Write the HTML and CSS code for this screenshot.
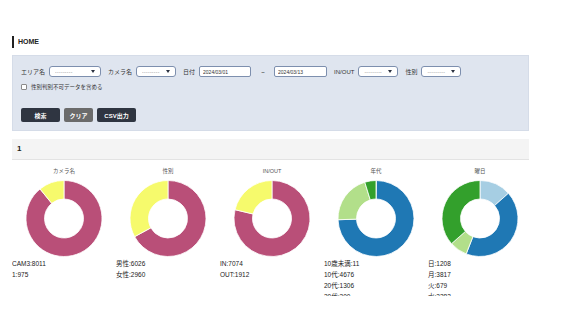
FILE: index.html
```html
<!DOCTYPE html>
<html>
<head>
    <title>HOME</title>
    <meta charset="utf-8">
    <link rel="stylesheet" href="styles.css">
</head>
<body>
    <div class="page">
        <h1 class="page-title">HOME</h1>

        <form class="search-panel">
            <div class="search-row">
                <label class="field">エリア名
                    <span class="select-wrap select-area"><select><option>---------</option></select></span>
                </label>
                <label class="field">カメラ名
                    <span class="select-wrap select-small"><select><option>---------</option></select></span>
                </label>
                <label class="field field-date">日付
                    <input type="text" class="date-input" value="2024/03/01">
                </label>
                <span class="tilde">~</span>
                <input type="text" class="date-input date-to" value="2024/03/13">
                <label class="field">IN/OUT
                    <span class="select-wrap select-small"><select><option>---------</option></select></span>
                </label>
                <label class="field">性別
                    <span class="select-wrap select-small"><select><option>---------</option></select></span>
                </label>
            </div>
            <label class="check-row"><input type="checkbox">性別判別不可データを含める</label>
            <div class="button-row">
                <button type="button" class="btn btn-dark">検索</button>
                <button type="button" class="btn btn-gray">クリア</button>
                <button type="button" class="btn btn-dark">CSV出力</button>
            </div>
        </form>

        <div class="result-header">1</div>

        <div class="chart-row">
            <div class="chart" data-values="8011,975" data-colors="#b94f78,#f6fa6c">
                <div class="chart-title">カメラ名</div>
                <svg class="donut" width="104" height="79" viewBox="0 0 104 79"></svg>
                <ul class="chart-legend">
                    <li>CAM3:8011</li>
                    <li>1:975</li>
                </ul>
            </div>
            <div class="chart" data-values="6026,2960" data-colors="#b94f78,#f6fa6c">
                <div class="chart-title">性別</div>
                <svg class="donut" width="104" height="79" viewBox="0 0 104 79"></svg>
                <ul class="chart-legend">
                    <li>男性:6026</li>
                    <li>女性:2960</li>
                </ul>
            </div>
            <div class="chart" data-values="7074,1912" data-colors="#b94f78,#f6fa6c">
                <div class="chart-title">IN/OUT</div>
                <svg class="donut" width="104" height="79" viewBox="0 0 104 79"></svg>
                <ul class="chart-legend">
                    <li>IN:7074</li>
                    <li>OUT:1912</li>
                </ul>
            </div>
            <div class="chart" data-values="11,4676,1306,300" data-colors="#a6cee3,#1f78b4,#b2df8a,#33a02c">
                <div class="chart-title">年代</div>
                <svg class="donut" width="104" height="79" viewBox="0 0 104 79"></svg>
                <ul class="chart-legend">
                    <li>10歳未満:11</li>
                    <li>10代:4676</li>
                    <li>20代:1306</li>
                    <li>30代:300</li>
                </ul>
            </div>
            <div class="chart" data-values="1208,3817,679,3282" data-colors="#a6cee3,#1f78b4,#b2df8a,#33a02c">
                <div class="chart-title">曜日</div>
                <svg class="donut" width="104" height="79" viewBox="0 0 104 79"></svg>
                <ul class="chart-legend">
                    <li>日:1208</li>
                    <li>月:3817</li>
                    <li>火:679</li>
                    <li>水:3282</li>
                </ul>
            </div>
        </div>
    </div>

    <script>
        const CX = 52, CY = 39.5, R_OUT = 38, R_IN = 19.5;

        function point(r, deg) {
            const rad = deg * Math.PI / 180;
            return (CX + r * Math.sin(rad)).toFixed(2) + ' ' + (CY - r * Math.cos(rad)).toFixed(2);
        }

        function arcPath(a0, a1) {
            const large = (a1 - a0) > 180 ? 1 : 0;
            return 'M ' + point(R_OUT, a0) +
                ' A ' + R_OUT + ' ' + R_OUT + ' 0 ' + large + ' 1 ' + point(R_OUT, a1) +
                ' L ' + point(R_IN, a1) +
                ' A ' + R_IN + ' ' + R_IN + ' 0 ' + large + ' 0 ' + point(R_IN, a0) + ' Z';
        }

        document.querySelectorAll('.chart').forEach(function (chart) {
            const values = chart.dataset.values.split(',').map(Number);
            const colors = chart.dataset.colors.split(',');
            const total = values.reduce(function (a, b) { return a + b; }, 0);
            const svg = chart.querySelector('.donut');
            let start = 0;
            let html = '';
            values.forEach(function (v, i) {
                const end = start + v / total * 360;
                html += '<path d="' + arcPath(start, Math.min(end, 359.99)) + '" fill="' + colors[i] + '" stroke="#fff" stroke-width="0.8"></path>';
                start = end;
            });
            svg.innerHTML = html;
        });
    </script>
</body>
</html>
```

FILE: styles.css
```css
body {
    margin: 0;
    font-family: "Liberation Sans", "Noto Sans CJK JP", sans-serif;
    color: #222;
    background-color: #fff;
}

.page {
    width: 517px;
    margin-left: 12px;
}

.page-title {
    margin: 36px 0 0;
    height: 12px;
    line-height: 12px;
    border-left: 2px solid #222;
    padding-left: 4px;
    font-size: 7px;
    font-weight: bold;
}

/* search form */
.search-panel {
    margin-top: 7px;
    background-color: #dfe5ef;
    border: 1px solid #d5dce8;
    padding: 10px 8px 8px;
}

.search-row {
    display: flex;
    align-items: center;
    height: 11px;
    font-size: 6px;
    color: #333;
}

.field {
    display: flex;
    align-items: center;
    gap: 4px;
    margin-right: 7px;
}

.field-date {
    margin-right: 9px;
}

.select-wrap {
    position: relative;
    display: block;
    height: 11px;
}

.select-area {
    width: 52px;
}

.select-small {
    width: 40px;
}

.select-wrap select {
    appearance: none;
    -webkit-appearance: none;
    box-sizing: border-box;
    width: 100%;
    height: 11px;
    margin: 0;
    padding: 0 0 0 5px;
    border: 1px solid #7d8fae;
    border-radius: 3px;
    background-color: #fff;
    color: #8a8a8a;
    font-size: 5px;
    letter-spacing: 0.3px;
    font-family: "Liberation Sans", sans-serif;
}

.select-wrap::after {
    content: "";
    position: absolute;
    right: 6px;
    top: 4px;
    border-left: 2px solid transparent;
    border-right: 2px solid transparent;
    border-top: 3px solid #2a3140;
}

.date-input {
    box-sizing: border-box;
    width: 52px;
    height: 11px;
    margin: 0;
    padding: 0 0 0 3px;
    border: 1px solid #7d8fae;
    border-radius: 2px;
    background-color: #fff;
    color: #333;
    font-size: 5px;
    font-family: "Liberation Sans", sans-serif;
}

.tilde {
    width: 6px;
    margin-right: 8px;
    text-align: center;
}

.date-to {
    width: 53px;
    margin-right: 7px;
}

.check-row {
    display: flex;
    align-items: center;
    gap: 4px;
    height: 8px;
    margin-top: 6px;
    font-size: 5.5px;
    color: #333;
}

.check-row input {
    appearance: none;
    -webkit-appearance: none;
    width: 6px;
    height: 6px;
    margin: 0;
    border: 1px solid #8b8b8b;
    border-radius: 1px;
    background-color: #fff;
}

.button-row {
    display: flex;
    gap: 4px;
    margin-top: 17px;
}

.btn {
    height: 14px;
    padding: 0;
    border: none;
    border-radius: 2px;
    color: #fff;
    font-size: 6px;
    font-weight: bold;
    font-family: "Liberation Sans", "Noto Sans CJK JP", sans-serif;
    cursor: pointer;
}

.btn-dark {
    width: 39px;
    background-color: #2f3541;
}

.btn-gray {
    width: 29px;
    background-color: #6b6b6b;
}

/* result */
.result-header {
    margin-top: 8px;
    height: 20px;
    line-height: 20px;
    padding-left: 5px;
    background-color: #f4f4f4;
    border-bottom: 1px solid #e3e3e3;
    font-size: 8px;
    font-weight: bold;
}

.chart-row {
    display: grid;
    grid-template-columns: repeat(5, 1fr);
    height: 136px;
    overflow: hidden;
}

.chart-title {
    margin-top: 7px;
    height: 8px;
    line-height: 8px;
    text-align: center;
    font-size: 5.5px;
    color: #555;
}

.donut {
    display: block;
    margin-top: 4px;
}

.chart-legend {
    list-style: none;
    margin: 0;
    padding: 0;
    font-size: 6.5px;
    line-height: 11px;
    color: #222;
}
```
